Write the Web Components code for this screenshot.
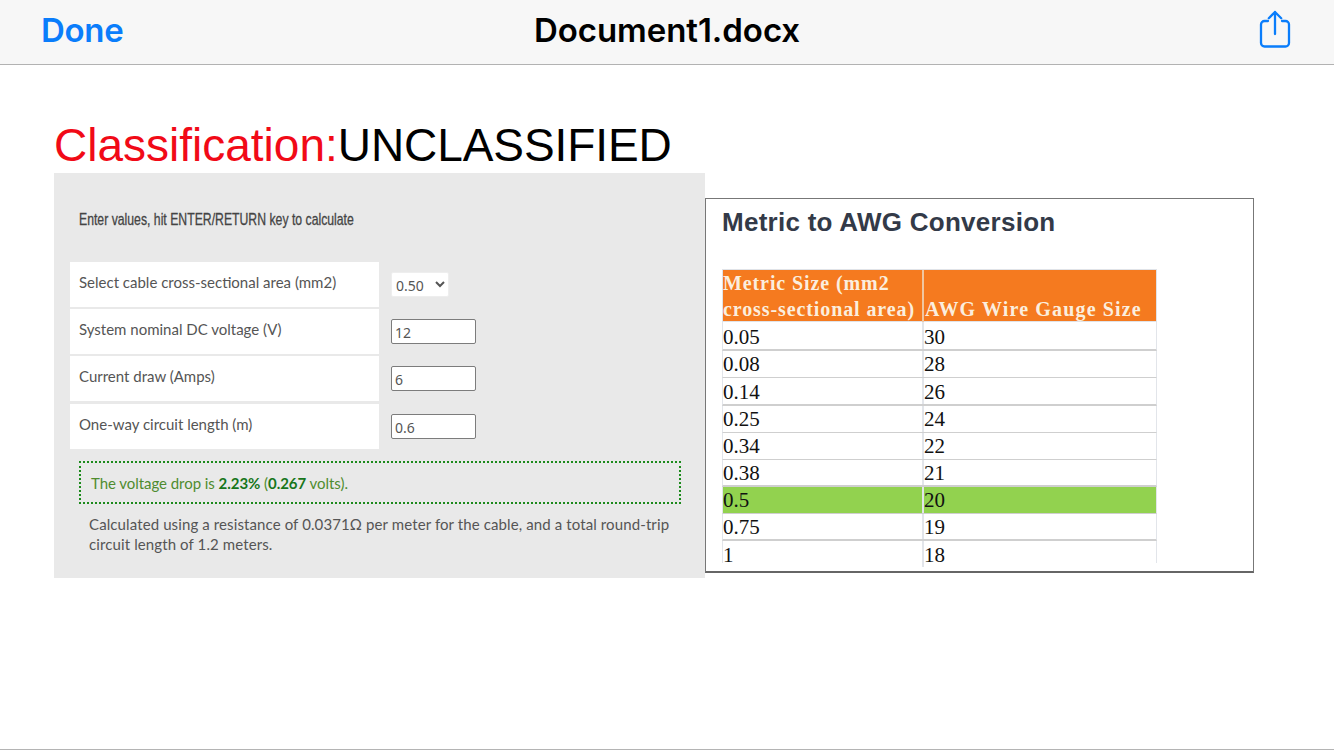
<!DOCTYPE html>
<html lang="en">
<head>
<meta charset="utf-8">
<title>Document1.docx</title>
<style>
html,body{margin:0;padding:0;background:#fff}
body{width:1334px;height:750px;overflow:hidden;font-family:"Liberation Sans",Arial,sans-serif}
</style>
</head>
<body>
<doc-viewer>
  <nav-bar slot="nav" title-text="Document1.docx"></nav-bar>
  <doc-heading slot="heading" label="Classification:" value="UNCLASSIFIED"></doc-heading>
  <calc-panel slot="left">
    <calc-row label="Select cable cross-sectional area (mm2)" type="select" value="0.50"></calc-row>
    <calc-row label="System nominal DC voltage (V)" value="12"></calc-row>
    <calc-row label="Current draw (Amps)" value="6"></calc-row>
    <calc-row label="One-way circuit length (m)" value="0.6"></calc-row>
  </calc-panel>
  <awg-table slot="right"></awg-table>
</doc-viewer>
<script>
function def(name, html, init){
  customElements.define(name, class extends HTMLElement{
    constructor(){super();this.attachShadow({mode:'open'}).innerHTML=html;}
    connectedCallback(){ if(init) init(this, this.shadowRoot); }
  });
}
def('doc-viewer',`<style>
:host{display:flex;flex-direction:column;width:1334px;height:750px;box-sizing:border-box;border-bottom:1px solid #b4b4b4}
.page{flex:1;padding:54px 0 0 54px;display:flex;flex-direction:column}
.shots{display:flex;align-items:flex-start;margin-top:2px}
</style>
<slot name="nav"></slot>
<div class="page"><slot name="heading"></slot>
<div class="shots"><slot name="left"></slot><slot name="right"></slot></div></div>`);

def('nav-bar',`<style>
:host{display:flex;align-items:center;justify-content:space-between;height:65px;box-sizing:border-box;background:#f7f7f7;border-bottom:1px solid #b2b2b2;padding:0 43px 4px 41px;position:relative;font-family:Inter,"Liberation Sans",sans-serif}
.done{font-size:33px;font-weight:600;color:#0a7dfb;letter-spacing:-.3px}
.title{position:absolute;left:0;right:0;text-align:center;font-size:33px;font-weight:600;color:#000;letter-spacing:-.05px}
svg{display:block;position:relative;margin-top:-3px}
</style>
<span class="done">Done</span><span class="title"></span>
<svg width="32" height="38" viewBox="0 0 32 38" fill="none" stroke="#0a7dfb" stroke-width="2.300" stroke-linecap="round" stroke-linejoin="round">
<path d="M9 11H5.500A3.500 3.500 0 0 0 2 14.500V33a3.500 3.500 0 0 0 3.500 3.500H26.500A3.500 3.500 0 0 0 30 33V14.500A3.500 3.500 0 0 0 26.500 11H23"/>
<path d="M16 24V2M9.800 8.200 16 2l6.200 6.200"/></svg>`,
(h,s)=>{s.querySelector('.title').textContent=h.getAttribute('title-text')});

def('doc-heading',`<style>
:host{display:block;font:46px/52px "Liberation Sans",Arial,sans-serif;color:#000;height:52px;white-space:nowrap}
.l{color:#f10a17}.v{letter-spacing:-.08px}
</style><span class="l"></span><span class="v"></span>`,
(h,s)=>{s.querySelector('.l').textContent=h.getAttribute('label');s.querySelector('.v').textContent=h.getAttribute('value')});

def('calc-row',`<style>
:host{display:flex;align-items:center;height:45px;font:15px Lato,"Noto Sans",sans-serif;color:#555}
.lab{width:309px;height:45px;box-sizing:border-box;background:#fff;padding:0 0 5px 9px;display:flex;align-items:center;white-space:nowrap}
.ctl{margin-left:12px;display:flex}
input,select{font:14px "Noto Sans","Open Sans",sans-serif;color:#555;box-sizing:border-box;background:#fff;margin:0}
input{width:85px;height:25px;border:1px solid #7c7c7c;border-radius:2px;padding:2px 3px 0;outline:none}
select{width:58px;height:25px;border:1px solid #eee;border-radius:2px;padding:2px 0 0}
</style><div class="lab"></div><div class="ctl"></div>`,
(h,s)=>{s.querySelector('.lab').textContent=h.getAttribute('label');
  const v=h.getAttribute('value'),c=s.querySelector('.ctl');
  if(h.getAttribute('type')==='select'){const e=document.createElement('select');const o=document.createElement('option');o.textContent=v;e.append(o);c.append(e);}
  else{const e=document.createElement('input');e.type='text';e.setAttribute('value',v);c.append(e);}
});

def('calc-panel',`<style>
:host{display:flex;flex-direction:column;width:651px;height:405px;flex:none;box-sizing:border-box;background:#e9e9e9;padding:36px 0 0 16px;color:#555}
.hint{font:17px/20px "Liberation Sans",sans-serif;color:#444;margin:1px 0 32px 9px;white-space:nowrap;transform:scaleX(.72);transform-origin:0 50%;-webkit-text-stroke:.3px #444}
.rows{display:flex;flex-direction:column;gap:2px}
::slotted(calc-row:last-child){margin-top:1px}
.result{margin:12px 0 0 9px;width:602px;height:43px;box-sizing:border-box;border:2px dotted #1c8a1c;display:flex;align-items:center;padding:0 0 0 10px;font:15px Lato,"Noto Sans",sans-serif;color:#4f8c2f;letter-spacing:-.05px;white-space:pre}
b{color:#17761b;font-weight:700}
.note{margin:10px 0 0 19px;width:590px;font:15px/20px Lato,"Noto Sans",sans-serif;color:#555;letter-spacing:.11px}
</style>
<div class="hint">Enter values, hit ENTER/RETURN key to calculate</div>
<div class="rows"><slot></slot></div>
<div class="result">The voltage drop is <b>2.23%</b> (<b>0.267</b> volts).</div>
<div class="note">Calculated using a resistance of 0.0371Ω per meter for the cable, and a total round-trip circuit length of 1.2 meters.</div>`);

const rows=[['0.05','30',29,2,3],['0.08','28',27,1,1],['0.14','26',28,2,2],['0.25','24',27,1,1],['0.34','22',27,1,1],['0.38','21',27,2,1],['0.5','20',27,1,1],['0.75','19',27,2,1],['1','18',22,0,2]];
def('awg-table',`<style>
:host{display:block;flex:none;width:549px;height:375px;box-sizing:border-box;margin-top:25px;background:#fff;border:1px solid #777;border-bottom:2px solid #666;padding:8px 0 0 16px}
h2{margin:0;font:700 26px/30px "Liberation Sans",sans-serif;color:#333a48;letter-spacing:.27px}
.tbl{margin-top:32px;width:435px;font:21px/24px "Liberation Serif",serif;color:#111}
.r{display:grid;grid-template-columns:201px 234px;box-sizing:border-box;border-bottom:1px solid #cfcfcf;border-right:1px solid #e2e5ea;border-left:1px solid #e2e5ea}
.r>div{border-right:2px solid #e2e5ea}
.r>div+div{border-right:0}
.h{background:#f57a1f;color:#fbeede;font:700 20px/26px "Liberation Serif",serif;letter-spacing:.9px;height:53px;border:1px solid #e0e3e8}
.h>div{height:52px;border-right:2px solid #f0c6a0;display:flex;align-items:flex-end;white-space:pre-line}
.h>div+div{padding-left:1px;letter-spacing:1.15px}
.g{background:#92d24f}
</style>
<h2>Metric to AWG Conversion</h2>
<div class="tbl">
<div class="r h"><div>Metric Size (mm2
cross-sectional area)</div><div>AWG Wire Gauge Size</div></div>
<div id="b"></div></div>`,
(h,s)=>{s.getElementById('b').innerHTML=rows.map(r=>`<div class="r${r[0]==='0.5'?' g':''}" style="height:${r[2]}px;border-bottom-width:${r[3]}px"><div style="padding-top:${r[4]}px">${r[0]}</div><div style="padding-top:${r[4]}px">${r[1]}</div></div>`).join('')});
</script>
</body>
</html>
